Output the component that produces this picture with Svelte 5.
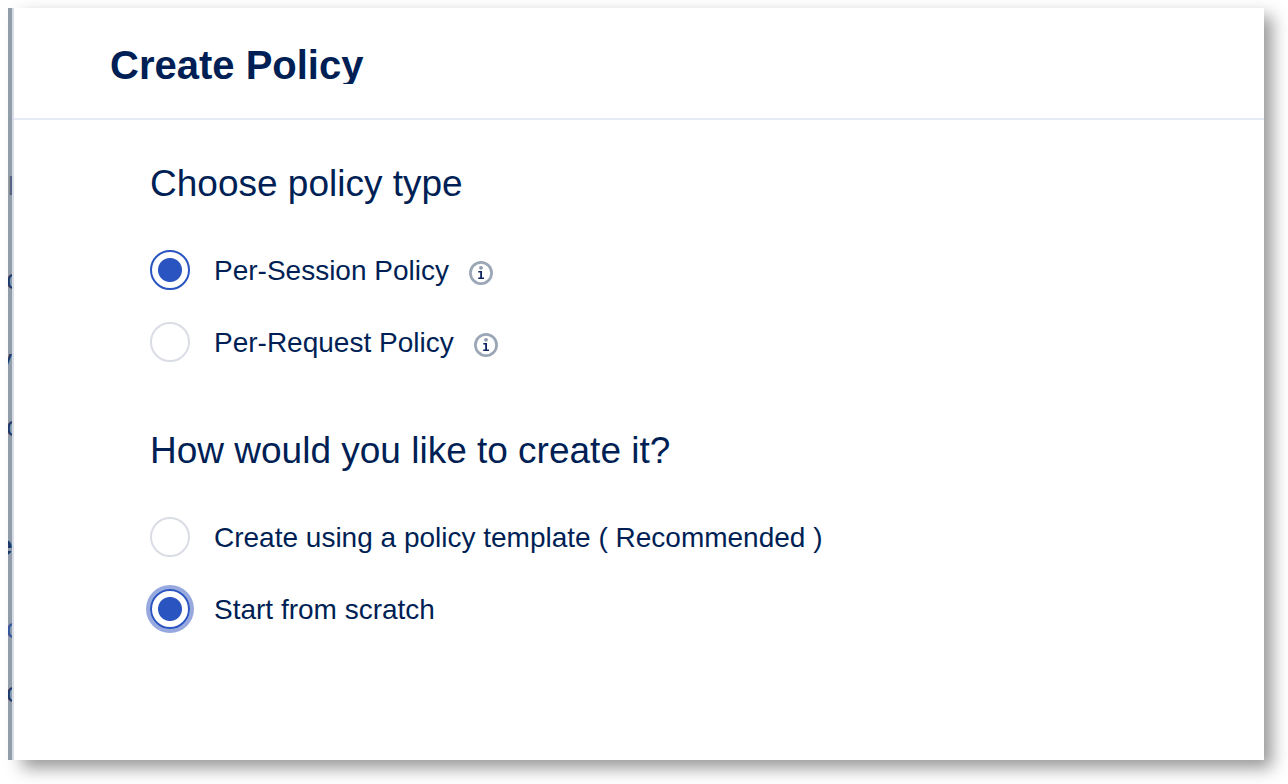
<script>
  let type = $state('session');
  let method = $state('scratch');

  const types = [
    { value: 'session', label: 'Per-Session Policy' },
    { value: 'request', label: 'Per-Request Policy' }
  ];
  const methods = [
    { value: 'template', label: 'Create using a policy template ( Recommended )' },
    { value: 'scratch', label: 'Start from scratch' }
  ];

  // Slivers of the page text that stay visible behind the dialog
  const behind = [
    { text: 'l', kind: 'bar', top: 166 },
    { text: 'c', kind: 'dark', top: 256 },
    { text: 'y', kind: 'tail', top: 336 },
    { text: 'c', kind: 'dark', top: 403 },
    { text: 'e', kind: 'bold', top: 522 },
    { text: 'c', kind: 'link', top: 605 },
    { text: 'c', kind: 'dark', top: 669 }
  ];
</script>

<div class="frame">
  <div class="backdrop" aria-hidden="true">
    {#each behind as b}
      <span class={b.kind} style="top: {b.top}px">{b.text}</span>
    {/each}
  </div>
  <main class="dialog">
    <header><h1>Create Policy</h1></header>
    <form>
      <fieldset>
        <legend>Choose policy type</legend>
        {#each types as t}
          <div class="option">
            <input type="radio" id={t.value} name="type" value={t.value} bind:group={type} />
            <label for={t.value}>{t.label}</label>
            <button type="button" aria-label="About {t.label}">
              <svg viewBox="0 0 24 24" width="24" height="24">
                <circle cx="12" cy="12" r="10.6" fill="none" stroke="#9ba7b7" stroke-width="2.7" />
                <circle cx="12" cy="6.8" r="1.9" fill="#8d9aae" />
                <path d="M9.3 10H13V16.6H15V18H9.2V16.6H11.2V11.4H9.3Z" fill="#0b2560" />
              </svg>
            </button>
          </div>
        {/each}
      </fieldset>
      <fieldset>
        <legend>How would you like to create it?</legend>
        {#each methods as m}
          <div class="option">
            <input type="radio" id={m.value} name="method" value={m.value} bind:group={method} class:active={m.value === 'scratch' && method === 'scratch'} />
            <label for={m.value}>{m.label}</label>
          </div>
        {/each}
      </fieldset>
    </form>
  </main>
</div>

<style>
  :global(body) {
    background: #fff;
    font-family: "Liberation Sans", Arial, Helvetica, sans-serif;
    color: #001f55;
  }
  :global(#app) {
    display: flow-root;
    overflow: hidden;
  }
  .frame {
    display: flex;
    box-sizing: border-box;
    min-height: calc(100vh - 32px);
    margin: 8px 24px 24px 8px;
  }
  .backdrop {
    position: relative;
    z-index: 1;
    overflow: hidden;
    box-sizing: border-box;
    flex: none;
    width: 6px;
    background: #929daa;
    border-right: 2px solid #d7dbe6;
  }
  .backdrop span {
    position: absolute;
    left: -2px;
    font-size: 28px;
    line-height: 32px;
    color: #1f3866;
  }
  .backdrop .bar {
    left: 0;
    font-size: 26px;
    line-height: 24px;
    color: #53637e;
  }
  .backdrop .tail {
    left: -10px;
  }
  .backdrop .bold {
    left: -11px;
    font-weight: 700;
  }
  .backdrop .link {
    color: #36549b;
  }
  .dialog {
    flex: 1;
    min-width: 0;
    background: #fff;
    box-shadow: 8px 8px 16px rgba(0, 0, 0, 0.41);
  }
  header {
    padding: 38px 96px 34px;
    border-bottom: 2px solid #e6e9f6;
  }
  h1 {
    margin: 0;
    overflow: hidden;
    font-size: 40px;
    line-height: 38px;
    font-weight: 700;
  }
  form {
    padding: 40px 136px;
  }
  fieldset {
    margin: 0 0 65px;
    padding: 0;
    border: 0;
    min-width: 0;
  }
  fieldset:last-child {
    margin-bottom: 0;
  }
  legend {
    padding: 0;
    margin-bottom: 42px;
    font-size: 37px;
    line-height: 48px;
  }
  .option {
    display: flex;
    align-items: center;
    height: 40px;
    margin-bottom: 32px;
  }
  .option:last-child {
    margin-bottom: 0;
  }
  input {
    appearance: none;
    box-sizing: border-box;
    flex: none;
    width: 40px;
    height: 40px;
    margin: 0 24px 0 0;
    border: 2px solid #dadde5;
    border-radius: 50%;
    background: #fff;
  }
  input:checked {
    border-color: #2a55c1;
    background: radial-gradient(circle, #2a55c1 0 11.5px, #fff 12.5px);
  }
  input.active,
  input:focus-visible {
    outline: none;
    box-shadow: 0 0 0 4px #98a9e0;
  }
  label {
    padding-top: 2px;
    font-size: 28px;
    line-height: 38px;
  }
  button {
    display: flex;
    margin: 6px 0 0 20px;
    padding: 0;
    border: 0;
    background: none;
  }
</style>
